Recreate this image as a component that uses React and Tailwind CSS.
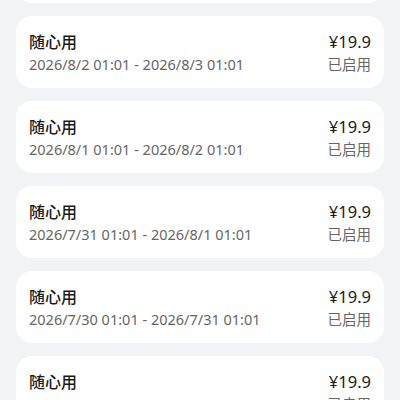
import React from "react";

const items = [
  ["2026/8/2 01:01", "2026/8/3 01:01"],
  ["2026/8/1 01:01", "2026/8/2 01:01"],
  ["2026/7/31 01:01", "2026/8/1 01:01"],
  ["2026/7/30 01:01", "2026/7/31 01:01"],
  ["2026/7/29 01:01", "2026/7/30 01:01"],
];

export default function App() {
  return (
    <div
      className="w-[400px] h-[400px] overflow-hidden bg-[#f1f3f5] px-4"
      style={{ fontFamily: '"Noto Sans", "Noto Sans CJK SC", sans-serif' }}
    >
      <div className="flex flex-col gap-[13px] mt-[-69px]">
        <div className="h-[72px] shrink-0 rounded-2xl bg-white" />
        {items.map(([a, b], i) => (
          <div
            key={i}
            className="h-[72px] shrink-0 rounded-2xl bg-white px-[13px] flex items-center justify-between"
          >
            <div className="flex flex-col">
              <div className="text-[16px] leading-[22px] text-[#1a1a1a] font-medium">随心用</div>
              <div className="text-[14.5px] leading-[20px] text-[#666666] mt-[1px]">
                {a} - {b}
              </div>
            </div>
            <div className="flex flex-col items-end">
              <div className="text-[16.5px] leading-[22px] text-[#1a1a1a]">¥19.9</div>
              <div className="text-[14.5px] leading-[20px] text-[#666666] mt-[1px]">已启用</div>
            </div>
          </div>
        ))}
      </div>
    </div>
  );
}
